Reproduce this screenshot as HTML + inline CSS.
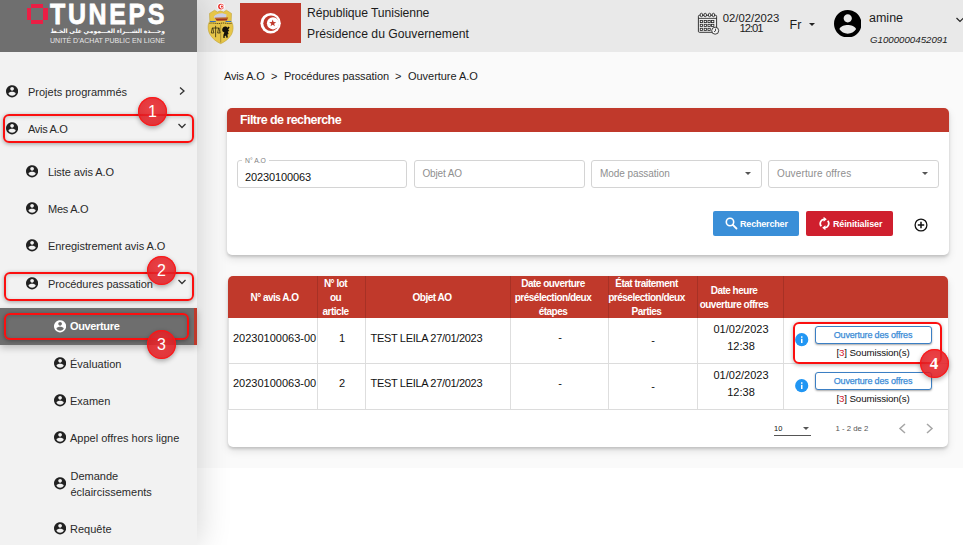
<!DOCTYPE html>
<html lang="fr">
<head>
<meta charset="utf-8">
<title>TUNEPS - Ouverture A.O</title>
<style>
*{box-sizing:border-box;margin:0;padding:0}
html,body{width:963px;height:545px;overflow:hidden;background:#fff}
body{font-family:"Liberation Sans","DejaVu Sans",sans-serif;color:#222;position:relative;font-size:11px}
.abs{position:absolute}
#mainbg{left:197px;top:52px;width:766px;height:416px;background:#fafafa}
#side{left:0;top:0;width:197px;height:545px;background:#f2f2f2;box-shadow:0 0 32px rgba(0,0,0,.19)}
#logo{left:0;top:0;width:197px;height:52px;background:#6f6f6f}
#top{left:197px;top:0;width:766px;height:52px;background:#e9e9e9}
.t{position:absolute;white-space:nowrap;line-height:1}
.mi{position:absolute;width:12.2px;height:12.6px}
.red{position:absolute;border:2px solid #fb0f0f;border-radius:6px;box-shadow:0 1px 4px rgba(0,0,0,.35), inset 0 1px 4px rgba(0,0,0,.18)}
.badge{position:absolute;width:29px;height:29px;border-radius:50%;background:radial-gradient(circle at 50% 40%,rgba(234,42,46,.88),rgba(222,26,32,.88) 75%,rgba(208,22,28,.9));color:#fff;font-size:16px;line-height:29px;text-align:center;box-shadow:0 2px 5px rgba(0,0,0,.32), inset 0 0 0 1.2px rgba(255,20,20,.85)}
.card{position:absolute;background:#fff;border-radius:5px;box-shadow:0 4px 9px rgba(0,0,0,.10),0 2px 3px rgba(0,0,0,.16)}
.inp{position:absolute;top:160px;height:28px;border:1px solid #d4d4d4;border-radius:3px;background:#fff}
.sb{font-size:11px;color:#2a2a2a}
.vl{width:1px;background:rgba(0,0,0,.13)}
.hl{height:1px;background:#dcdcdc}
.th{font-size:10px;letter-spacing:-.5px;font-weight:bold;color:#fff;text-align:center;line-height:14px;white-space:nowrap}
.td{font-size:11px;color:#111}
.ph{color:#8f8f8f;font-size:10px}
</style>
</head>
<body>
<div id="mainbg" class="abs"></div>
<div id="top" class="abs"></div>
<div id="side" class="abs"></div>
<div id="logo" class="abs"></div>


<!-- logo -->
<div class="abs" style="left:31px;top:4px;width:12px;height:4px;background:#ea1f45"></div>
<div class="abs" style="left:31px;top:20px;width:12px;height:4px;background:#ea1f45"></div>
<div class="abs" style="left:27px;top:8px;width:4px;height:12px;background:#ea1f45"></div>
<div class="abs" style="left:43px;top:8px;width:5px;height:12px;background:#ea1f45"></div>
<div class="t" style="left:50.3px;top:0px;font-size:29.4px;font-weight:bold;color:#fff;-webkit-text-stroke:.8px #fff;letter-spacing:3.1px;line-height:28px;transform:scaleX(.85);transform-origin:0 0">TUNEPS</div>
<div class="t" style="left:50px;top:26px;width:115px;font-size:6px;color:#fff;text-align:right;direction:rtl;font-family:'Liberation Sans','DejaVu Sans',sans-serif;font-weight:bold;line-height:10px">وحـــدة الشـــراء العـــمومي على الخـط</div>
<div class="t" style="left:50px;top:37px;font-size:7px;color:#e6e6e6;letter-spacing:.025px;line-height:8px">UNITÉ D'ACHAT PUBLIC EN LIGNE</div>

<!-- sidebar -->
<div class="abs" style="left:0;top:308px;width:197px;height:37px;background:#6e6e6e;border-right:3px solid #c0392b;box-shadow:0 3px 7px rgba(0,0,0,.22)"></div>

<svg class="mi" style="left:6px;top:85px" viewBox="2 2 20 20" fill="#222"><path d="M12 2C6.48 2 2 6.48 2 12s4.48 10 10 10 10-4.48 10-10S17.52 2 12 2zm0 3c1.66 0 3 1.34 3 3s-1.34 3-3 3-3-1.34-3-3 1.34-3 3-3zm0 14.2c-2.500 0-4.710-1.280-6-3.220.03-1.990 4-3.080 6-3.080 1.990 0 5.970 1.090 6 3.080-1.290 1.940-3.500 3.220-6 3.220z"/></svg>
<div class="t sb" style="left:28px;top:87px">Projets programmés</div>
<svg class="abs" style="left:178px;top:86px" width="8" height="10" viewBox="0 0 8 10"><path d="M2 1.5 L6 5 L2 8.5" fill="none" stroke="#333" stroke-width="1.3"/></svg>

<div class="red" style="left:3px;top:114.3px;width:190.5px;height:28.3px"></div>
<svg class="mi" style="left:6px;top:122px" viewBox="2 2 20 20" fill="#222"><path d="M12 2C6.48 2 2 6.48 2 12s4.48 10 10 10 10-4.48 10-10S17.52 2 12 2zm0 3c1.66 0 3 1.34 3 3s-1.34 3-3 3-3-1.34-3-3 1.34-3 3-3zm0 14.2c-2.500 0-4.710-1.280-6-3.220.03-1.990 4-3.080 6-3.080 1.990 0 5.970 1.090 6 3.080-1.290 1.940-3.500 3.220-6 3.220z"/></svg>
<div class="t sb" style="left:28px;top:124px;letter-spacing:-.3px">Avis A.O</div>
<svg class="abs" style="left:177px;top:122px" width="10" height="8" viewBox="0 0 10 8"><path d="M1.5 2 L5 5.5 L8.5 2" fill="none" stroke="#333" stroke-width="1.3"/></svg>
<div class="badge" style="left:138px;top:96.7px">1</div>

<svg class="mi" style="left:26px;top:165px" viewBox="2 2 20 20" fill="#222"><path d="M12 2C6.48 2 2 6.48 2 12s4.48 10 10 10 10-4.48 10-10S17.52 2 12 2zm0 3c1.66 0 3 1.34 3 3s-1.34 3-3 3-3-1.34-3-3 1.34-3 3-3zm0 14.2c-2.500 0-4.710-1.280-6-3.220.03-1.990 4-3.080 6-3.080 1.990 0 5.970 1.090 6 3.080-1.290 1.940-3.500 3.220-6 3.220z"/></svg>
<div class="t sb" style="left:48px;top:167px;letter-spacing:-.1px">Liste avis A.O</div>
<svg class="mi" style="left:26px;top:202px" viewBox="2 2 20 20" fill="#222"><path d="M12 2C6.48 2 2 6.48 2 12s4.48 10 10 10 10-4.48 10-10S17.52 2 12 2zm0 3c1.66 0 3 1.34 3 3s-1.34 3-3 3-3-1.34-3-3 1.34-3 3-3zm0 14.2c-2.500 0-4.710-1.280-6-3.220.03-1.990 4-3.080 6-3.080 1.990 0 5.970 1.090 6 3.080-1.290 1.940-3.500 3.220-6 3.220z"/></svg>
<div class="t sb" style="left:48px;top:204px;letter-spacing:-.25px">Mes A.O</div>
<svg class="mi" style="left:26px;top:239px" viewBox="2 2 20 20" fill="#222"><path d="M12 2C6.48 2 2 6.48 2 12s4.48 10 10 10 10-4.48 10-10S17.52 2 12 2zm0 3c1.66 0 3 1.34 3 3s-1.34 3-3 3-3-1.34-3-3 1.34-3 3-3zm0 14.2c-2.500 0-4.710-1.280-6-3.220.03-1.990 4-3.080 6-3.080 1.990 0 5.970 1.090 6 3.080-1.290 1.940-3.500 3.220-6 3.220z"/></svg>
<div class="t sb" style="left:48px;top:241px;letter-spacing:-.06px">Enregistrement avis A.O</div>

<div class="red" style="left:3.5px;top:271.8px;width:190.3px;height:29.7px"></div>
<svg class="mi" style="left:26px;top:277px" viewBox="2 2 20 20" fill="#222"><path d="M12 2C6.48 2 2 6.48 2 12s4.48 10 10 10 10-4.48 10-10S17.52 2 12 2zm0 3c1.66 0 3 1.34 3 3s-1.34 3-3 3-3-1.34-3-3 1.34-3 3-3zm0 14.2c-2.500 0-4.710-1.280-6-3.220.03-1.990 4-3.080 6-3.080 1.990 0 5.970 1.090 6 3.080-1.290 1.940-3.500 3.220-6 3.220z"/></svg>
<div class="t sb" style="left:48px;top:279px;letter-spacing:-.08px">Procédures passation</div>
<svg class="abs" style="left:177px;top:278px" width="10" height="8" viewBox="0 0 10 8"><path d="M1.5 2 L5 5.5 L8.5 2" fill="none" stroke="#333" stroke-width="1.3"/></svg>
<div class="badge" style="left:147px;top:255.8px">2</div>

<div class="red" style="left:3.5px;top:312.9px;width:185.1px;height:27px"></div>
<svg class="mi" style="left:54px;top:320px" viewBox="2 2 20 20" fill="#fff"><path d="M12 2C6.48 2 2 6.48 2 12s4.48 10 10 10 10-4.48 10-10S17.52 2 12 2zm0 3c1.66 0 3 1.34 3 3s-1.34 3-3 3-3-1.34-3-3 1.34-3 3-3zm0 14.2c-2.500 0-4.710-1.280-6-3.220.03-1.990 4-3.080 6-3.080 1.990 0 5.970 1.090 6 3.080-1.290 1.940-3.500 3.220-6 3.220z"/></svg>
<div class="t sb" style="left:70px;top:321px;color:#fff;font-weight:bold;letter-spacing:-.35px">Ouverture</div>
<div class="badge" style="left:147px;top:329.6px">3</div>

<svg class="mi" style="left:54px;top:357px" viewBox="2 2 20 20" fill="#222"><path d="M12 2C6.48 2 2 6.48 2 12s4.48 10 10 10 10-4.48 10-10S17.52 2 12 2zm0 3c1.66 0 3 1.34 3 3s-1.34 3-3 3-3-1.34-3-3 1.34-3 3-3zm0 14.2c-2.500 0-4.710-1.280-6-3.220.03-1.990 4-3.080 6-3.080 1.990 0 5.970 1.090 6 3.080-1.290 1.940-3.500 3.220-6 3.220z"/></svg>
<div class="t sb" style="left:70px;top:359px">Évaluation</div>
<svg class="mi" style="left:54px;top:394px" viewBox="2 2 20 20" fill="#222"><path d="M12 2C6.48 2 2 6.48 2 12s4.48 10 10 10 10-4.48 10-10S17.52 2 12 2zm0 3c1.66 0 3 1.34 3 3s-1.34 3-3 3-3-1.34-3-3 1.34-3 3-3zm0 14.2c-2.500 0-4.710-1.280-6-3.220.03-1.990 4-3.080 6-3.080 1.990 0 5.970 1.090 6 3.080-1.290 1.940-3.500 3.220-6 3.220z"/></svg>
<div class="t sb" style="left:70px;top:396px">Examen</div>
<svg class="mi" style="left:54px;top:431px" viewBox="2 2 20 20" fill="#222"><path d="M12 2C6.48 2 2 6.48 2 12s4.48 10 10 10 10-4.48 10-10S17.52 2 12 2zm0 3c1.66 0 3 1.34 3 3s-1.34 3-3 3-3-1.34-3-3 1.34-3 3-3zm0 14.2c-2.500 0-4.710-1.280-6-3.220.03-1.990 4-3.080 6-3.080 1.990 0 5.970 1.090 6 3.080-1.290 1.940-3.500 3.220-6 3.220z"/></svg>
<div class="t sb" style="left:70px;top:433px">Appel offres hors ligne</div>
<svg class="mi" style="left:54px;top:477px" viewBox="2 2 20 20" fill="#222"><path d="M12 2C6.48 2 2 6.48 2 12s4.48 10 10 10 10-4.48 10-10S17.52 2 12 2zm0 3c1.66 0 3 1.34 3 3s-1.34 3-3 3-3-1.34-3-3 1.34-3 3-3zm0 14.2c-2.500 0-4.710-1.280-6-3.220.03-1.990 4-3.080 6-3.080 1.990 0 5.970 1.090 6 3.080-1.290 1.940-3.500 3.220-6 3.220z"/></svg>
<div class="t sb" style="left:70.5px;top:468px;line-height:16px">Demande<br>éclaircissements</div>
<svg class="mi" style="left:54px;top:522px" viewBox="2 2 20 20" fill="#222"><path d="M12 2C6.48 2 2 6.48 2 12s4.48 10 10 10 10-4.48 10-10S17.52 2 12 2zm0 3c1.66 0 3 1.34 3 3s-1.34 3-3 3-3-1.34-3-3 1.34-3 3-3zm0 14.2c-2.500 0-4.710-1.280-6-3.220.03-1.990 4-3.080 6-3.080 1.990 0 5.970 1.090 6 3.080-1.290 1.940-3.500 3.220-6 3.220z"/></svg>
<div class="t sb" style="left:70px;top:524px">Requête</div>

<!-- top header -->
<svg class="abs" style="left:205px;top:0px" width="32" height="46" viewBox="205 0 32 46">
<circle cx="221" cy="6.600" r="3.800" fill="#fff"/>
<circle cx="221" cy="6.600" r="2.900" fill="#e8302c"/>
<circle cx="221.700" cy="6.600" r="2.100" fill="#fff"/>
<circle cx="221.900" cy="6.600" r="1.100" fill="#e8302c"/>
<path d="M209.500 13.400 L214.500 10.200 L217.500 12 L220.500 10.800 L223.500 12 L226.400 10.200 L231.500 13.400 L231.200 21.400 C233.600 24 233.800 30 231.500 34.500 C229 39 224.500 42 220.700 43.700 C217 42 212.500 39 210 34.500 C207.500 30 207.500 24 209.800 21.400 Z" fill="#e6c548" stroke="#b99a2c" stroke-width=".5"/>
<path d="M213.800 16.800 C215 14.200 219 13 222.500 13.200 L226.600 14.600 L226 17.700 L214.500 17.900 Z" fill="#c9cde6"/>
<path d="M214.800 17.700 L228.200 17.500 L226.800 20.600 L216.600 20.700 Z" fill="#9e3420"/>
<path d="M215.500 18.300 L227.600 18.100" stroke="#e0a03a" stroke-width=".6"/>
<path d="M209.900 21.500 H215.800 M225.600 21.500 H231.200" stroke="#3a6db8" stroke-width="1.100"/>
<path d="M209.500 23.300 C213 22.300 217 24.300 220.700 23.300 C224.500 22.300 228 24.300 231.700 23.300" stroke="#4a3c12" stroke-width=".9" fill="none" stroke-dasharray="1.200 .7"/>
<path d="M220.700 24.500 V42.500" stroke="#6b5a1c" stroke-width=".5"/>
<path d="M215.600 25.800 V37.200 M212 28 H219.300 M212.300 28 L211.300 33 H213.800 L212.800 28 M218.600 28 L217.600 33 H220 L219 28" stroke="#1e1a0a" stroke-width=".7" fill="none"/>
<path d="M223.200 27.200 C224.500 26 226.800 26.300 227.400 27.800 L228.600 26.600 L229.600 27.400 L228.200 29.600 L229.300 31 L227.800 31.400 L228.600 34 L227.400 34.600 L227.900 37.600 L226.300 37.800 L226 35.400 L224.600 36.200 L224.800 38 L223.200 37.800 L223.500 34.600 L224.400 32.600 L222.600 31.400 C221.800 30 222.200 28.200 223.200 27.200 Z" fill="#15130c"/>
</svg>
<div class="abs" style="left:240px;top:3px;width:61px;height:40px;background:#c0392b"></div>
<svg class="abs" style="left:260px;top:12px" width="22" height="22" viewBox="0 0 22 22">
<circle cx="10.6" cy="11.3" r="10.2" fill="#fff"/>
<circle cx="11" cy="11.3" r="7.7" fill="#c0392b"/>
<circle cx="13" cy="11.3" r="6.1" fill="#fff"/>
<path d="M12.70 7.60 L13.58 10.09 L16.22 10.16 L14.13 11.76 L14.87 14.29 L12.70 12.80 L10.53 14.29 L11.27 11.76 L9.18 10.16 L11.82 10.09 Z" fill="#c0392b"/>
</svg>
<div class="t" id="rt1" style="left:307px;top:7px;font-size:12.2px;color:#1c1c1c;letter-spacing:-.08px">République Tunisienne</div>
<div class="t" id="rt2" style="left:307px;top:28px;font-size:12.2px;color:#1c1c1c">Présidence du Gouvernement</div>

<svg class="abs" style="left:695px;top:10px" width="28" height="28" viewBox="695 10 28 28">
<rect x="698.4" y="15.3" width="18.2" height="17" rx="1" fill="#ededed" stroke="#222" stroke-width=".9"/>
<path d="M698.4 18.4 H716.6" stroke="#222" stroke-width=".8"/>
<g fill="#e9e9e9" stroke="#222" stroke-width=".85"><ellipse cx="701.4" cy="15" rx="1.3" ry="1.75"/><ellipse cx="705.2" cy="15" rx="1.3" ry="1.75"/><ellipse cx="709.6" cy="15" rx="1.3" ry="1.75"/><ellipse cx="713.4" cy="15" rx="1.3" ry="1.75"/></g>
<g fill="#f6f6f6" stroke="#222" stroke-width=".8"><rect x="700.25" y="20.40" width="2.3" height="2.2"/><rect x="704.15" y="20.40" width="2.3" height="2.2"/><rect x="707.95" y="20.40" width="2.3" height="2.2"/><rect x="711.55" y="20.40" width="2.3" height="2.2"/><rect x="700.25" y="24.30" width="2.3" height="2.2"/><rect x="704.15" y="24.30" width="2.3" height="2.2"/><rect x="707.95" y="24.30" width="2.3" height="2.2"/><rect x="711.55" y="24.30" width="2.3" height="2.2"/><rect x="700.25" y="28.30" width="2.3" height="2.2"/><rect x="704.15" y="28.30" width="2.3" height="2.2"/><rect x="707.95" y="28.30" width="2.3" height="2.2"/></g>
<circle cx="715.2" cy="30.7" r="3.5" fill="#f2f2f2" stroke="#222" stroke-width=".85"/>
<path d="M715.5 28.700 V30.900 L714 31.800" fill="none" stroke="#222" stroke-width=".8"/>
</svg>
<div class="t" id="dt1" style="left:721px;top:13px;width:60px;text-align:center;font-size:11.3px;color:#1c1c1c">02/02/2023</div>
<div class="t" id="dt2" style="left:721px;top:23px;width:60px;text-align:center;font-size:11.3px;letter-spacing:-1.1px;color:#1c1c1c">12:01</div>
<div class="t" id="fr" style="left:789.5px;top:18.5px;font-size:12.5px;color:#1c1c1c">Fr</div>
<div class="abs" style="left:809px;top:23px;border-left:3.500px solid transparent;border-right:3.500px solid transparent;border-top:3.500px solid #222"></div>
<svg class="abs" style="left:833.6px;top:9.6px" width="27.5" height="27.5" viewBox="2 2 20 20" fill="#000"><path d="M12 2C6.48 2 2 6.48 2 12s4.48 10 10 10 10-4.48 10-10S17.52 2 12 2zm0 3c1.66 0 3 1.34 3 3s-1.34 3-3 3-3-1.34-3-3 1.34-3 3-3zm0 14.2c-2.500 0-4.710-1.280-6-3.220.03-1.990 4-3.080 6-3.080 1.990 0 5.970 1.090 6 3.080-1.290 1.940-3.500 3.220-6 3.220z"/></svg>
<div class="t" id="am" style="left:869px;top:12px;font-size:12.5px;color:#1c1c1c">amine</div>
<div class="t" id="gid" style="left:870px;top:35px;font-size:9.7px;font-style:italic;color:#1c1c1c">G1000000452091</div>
<svg class="abs" style="left:955px;top:16px" width="10" height="8" viewBox="0 0 10 8"><path d="M1.5 2 L5 5.5 L8.5 2" fill="none" stroke="#222" stroke-width="1.2"/></svg>

<!-- breadcrumb -->
<div class="t" id="bc1" style="left:224px;top:71px;font-size:11px;letter-spacing:-.17px;color:#1c1c1c">Avis A.O</div>
<div class="t" style="left:271px;top:71px;font-size:11px;color:#1c1c1c">&gt;</div>
<div class="t" id="bc2" style="left:284px;top:71px;font-size:11px;letter-spacing:-.07px;color:#1c1c1c">Procédures passation</div>
<div class="t" style="left:395px;top:71px;font-size:11px;color:#1c1c1c">&gt;</div>
<div class="t" id="bc3" style="left:408px;top:71px;font-size:11px;letter-spacing:-.04px;color:#1c1c1c">Ouverture A.O</div>

<!-- filter card -->
<div class="card" style="left:227px;top:108px;width:722px;height:146.500px"></div>
<div class="abs" style="left:227px;top:108px;width:722px;height:24px;background:#c0392b;border-radius:5px 5px 0 0"></div>
<div class="t" id="ft" style="left:240px;top:113.6px;font-size:12.5px;letter-spacing:-.57px;font-weight:bold;color:#fff">Filtre de recherche</div>

<div class="inp" style="left:237px;width:170px"></div>
<div class="t" style="left:242px;top:157px;background:#fff;padding:0 3px;font-size:6.8px;color:#808080;line-height:7px">N° A.O</div>
<div class="t" id="v1" style="left:245px;top:172px;font-size:11px;letter-spacing:-.12px;color:#111">20230100063</div>
<div class="inp" style="left:414px;width:171px"></div>
<div class="t ph" id="p2" style="left:422.4px;top:169.4px;letter-spacing:-.14px">Objet AO</div>
<div class="inp" style="left:591px;width:171px"></div>
<div class="t ph" id="p3" style="left:600px;top:169.4px;letter-spacing:-.07px">Mode passation</div>
<div class="abs" style="left:745px;top:172px;border-left:3.200px solid transparent;border-right:3.200px solid transparent;border-top:3.200px solid #555"></div>
<div class="inp" style="left:768px;width:171px"></div>
<div class="t ph" id="p4" style="left:777px;top:169.4px;letter-spacing:.14px">Ouverture offres</div>
<div class="abs" style="left:922px;top:172px;border-left:3.200px solid transparent;border-right:3.200px solid transparent;border-top:3.200px solid #555"></div>

<div class="abs" style="left:713px;top:211px;width:86px;height:25px;background:#3a8fd8;border-radius:2px"></div>
<svg class="abs" style="left:725px;top:217px" width="13" height="13" viewBox="0 0 13 13"><circle cx="5" cy="5" r="3.700" fill="none" stroke="#fff" stroke-width="1.600"/><path d="M7.800 7.800 L11.500 11.500" stroke="#fff" stroke-width="1.800" stroke-linecap="round"/></svg>
<div class="t" id="b1" style="left:740px;top:219.8px;font-size:9px;letter-spacing:-.18px;font-weight:bold;color:#fff">Rechercher</div>
<div class="abs" style="left:806px;top:211px;width:87px;height:25px;background:#cf1f2e;border-radius:2px"></div>
<svg class="abs" style="left:818px;top:217px" width="13" height="13" viewBox="0 0 13 13"><path d="M6.5 2.300 A4.200 4.200 0 0 0 3.300 9.300 M6.500 10.700 A4.200 4.200 0 0 0 9.700 3.700" fill="none" stroke="#fff" stroke-width="1.700"/><path d="M5.600 -0.200 L8.800 2.300 L5.600 4.800 Z M7.400 8.200 L4.200 10.700 L7.400 13.200 Z" fill="#fff"/></svg>
<div class="t" id="b2" style="left:833px;top:219.8px;font-size:9px;letter-spacing:-.13px;font-weight:bold;color:#fff">Réinitialiser</div>
<svg class="abs" style="left:913px;top:217px" width="16" height="16" viewBox="0 0 16 16"><circle cx="8" cy="8" r="5.900" fill="#fff" stroke="#111" stroke-width="1.300"/><path d="M8 4.800 V11.200 M4.800 8 H11.200" stroke="#111" stroke-width="1.500"/></svg>

<!-- table card -->
<div class="card" style="left:228px;top:276px;width:720px;height:171px"></div>
<div class="abs" style="left:228px;top:276px;width:720px;height:42px;background:#c0392b;border-radius:5px 5px 0 0"></div>
<div class="abs vl" style="left:317px;top:276px;height:133px"></div>
<div class="abs vl" style="left:365px;top:276px;height:133px"></div>
<div class="abs vl" style="left:510px;top:276px;height:133px"></div>
<div class="abs vl" style="left:608px;top:276px;height:133px"></div>
<div class="abs vl" style="left:697px;top:276px;height:133px"></div>
<div class="abs vl" style="left:783px;top:276px;height:133px"></div>
<div class="abs hl" style="left:228px;top:363px;width:720px"></div>
<div class="abs hl" style="left:228px;top:409px;width:720px"></div>
<div class="abs" style="left:228px;top:318px;width:1px;height:92px;background:#e2e2e2"></div>

<div class="t th" style="left:234px;width:81px;top:290.8px">N° avis A.O</div>
<div class="t th" style="left:310px;width:51px;top:276.8px">N° lot<br>ou<br>article</div>
<div class="t th" style="left:382px;width:100px;top:290.8px">Objet AO</div>
<div class="t th" style="left:503px;width:100px;top:276.8px">Date ouverture<br>présélection/deux<br>étapes</div>
<div class="t th" style="left:596px;width:101px;top:276.8px">État traitement<br>préselection/deux<br>Parties</div>
<div class="t th" style="left:684px;width:100px;top:283.8px">Date heure<br>ouverture offres</div>

<div class="t td" style="left:233px;top:333.3px">20230100063-00</div>
<div class="t td" style="left:322px;width:40px;text-align:center;top:333.3px">1</div>
<div class="t td" style="left:370.500px;top:333.3px;letter-spacing:-.32px">TEST LEILA 27/01/2023</div>
<div class="t td" style="left:540px;width:40px;text-align:center;top:332.4px">-</div>
<div class="t td" style="left:633px;width:40px;text-align:center;top:335px">-</div>
<div class="t td" style="left:700px;width:82px;text-align:center;top:321.2px;line-height:17px">01/02/2023<br>12:38</div>
<svg class="abs" style="left:795px;top:333px" width="14" height="14" viewBox="0 0 14 14"><circle cx="6.700" cy="6.700" r="6.600" fill="#2196f3"/><rect x="6" y="5.800" width="1.500" height="4.200" fill="#fff"/><rect x="6" y="3.300" width="1.500" height="1.500" fill="#fff"/></svg>
<div class="abs" style="left:815px;top:326px;width:116.500px;height:17.500px;border:1px solid #3b7fc4;border-radius:3px;background:#fff;box-shadow:0 1px 2px rgba(0,0,0,.35)"></div>
<div class="t" style="left:815px;width:116px;text-align:center;top:330.5px;font-size:9px;letter-spacing:-.17px;color:#3a8bd6;-webkit-text-stroke:.25px #3a8bd6">Ouverture des offres</div>
<div class="t" style="left:815px;width:116px;text-align:center;top:347.5px;font-size:9.800px;letter-spacing:-.15px;color:#111">[<span style="color:#d3202e">3</span>] Soumission(s)</div>

<div class="t td" style="left:233px;top:378.4px">20230100063-00</div>
<div class="t td" style="left:322px;width:40px;text-align:center;top:378.4px">2</div>
<div class="t td" style="left:370.500px;top:378.4px;letter-spacing:-.32px">TEST LEILA 27/01/2023</div>
<div class="t td" style="left:540px;width:40px;text-align:center;top:378.4px">-</div>
<div class="t td" style="left:633px;width:40px;text-align:center;top:381px">-</div>
<div class="t td" style="left:700px;width:82px;text-align:center;top:367.2px;line-height:17px">01/02/2023<br>12:38</div>
<svg class="abs" style="left:795px;top:379px" width="14" height="14" viewBox="0 0 14 14"><circle cx="6.700" cy="6.700" r="6.600" fill="#2196f3"/><rect x="6" y="5.800" width="1.500" height="4.200" fill="#fff"/><rect x="6" y="3.300" width="1.500" height="1.500" fill="#fff"/></svg>
<div class="abs" style="left:815px;top:372px;width:116.500px;height:17.500px;border:1px solid #3b7fc4;border-radius:3px;background:#fff;box-shadow:0 1px 2px rgba(0,0,0,.35)"></div>
<div class="t" style="left:815px;width:116px;text-align:center;top:376.5px;font-size:9px;letter-spacing:-.17px;color:#3a8bd6;-webkit-text-stroke:.25px #3a8bd6">Ouverture des offres</div>
<div class="t" style="left:815px;width:116px;text-align:center;top:393.5px;font-size:9.800px;letter-spacing:-.15px;color:#111">[<span style="color:#d3202e">3</span>] Soumission(s)</div>

<div class="red" style="left:792.8px;top:322.2px;width:149.7px;height:42px;box-shadow:0 1px 4px rgba(0,0,0,.3)"></div>
<div class="badge" style="left:919.5px;top:349.1px;font-family:'Liberation Serif','DejaVu Serif',serif;font-weight:bold;font-size:17px">4</div>

<div class="t" style="left:774px;top:424.500px;font-size:7.5px;color:#111">10</div>
<div class="abs" style="left:774px;top:435px;width:37px;height:1px;background:#555"></div>
<div class="abs" style="left:803px;top:427px;border-left:3px solid transparent;border-right:3px solid transparent;border-top:3px solid #555"></div>
<div class="t" style="left:835.500px;top:424.500px;font-size:7.8px;color:#555">1 - 2 de 2</div>
<svg class="abs" style="left:898px;top:423px" width="9" height="11" viewBox="0 0 9 11"><path d="M7 1 L2 5.500 L7 10" fill="none" stroke="#a6a6a6" stroke-width="1.500"/></svg>
<svg class="abs" style="left:925px;top:423px" width="9" height="11" viewBox="0 0 9 11"><path d="M2 1 L7 5.500 L2 10" fill="none" stroke="#a6a6a6" stroke-width="1.500"/></svg>
</body>
</html>
